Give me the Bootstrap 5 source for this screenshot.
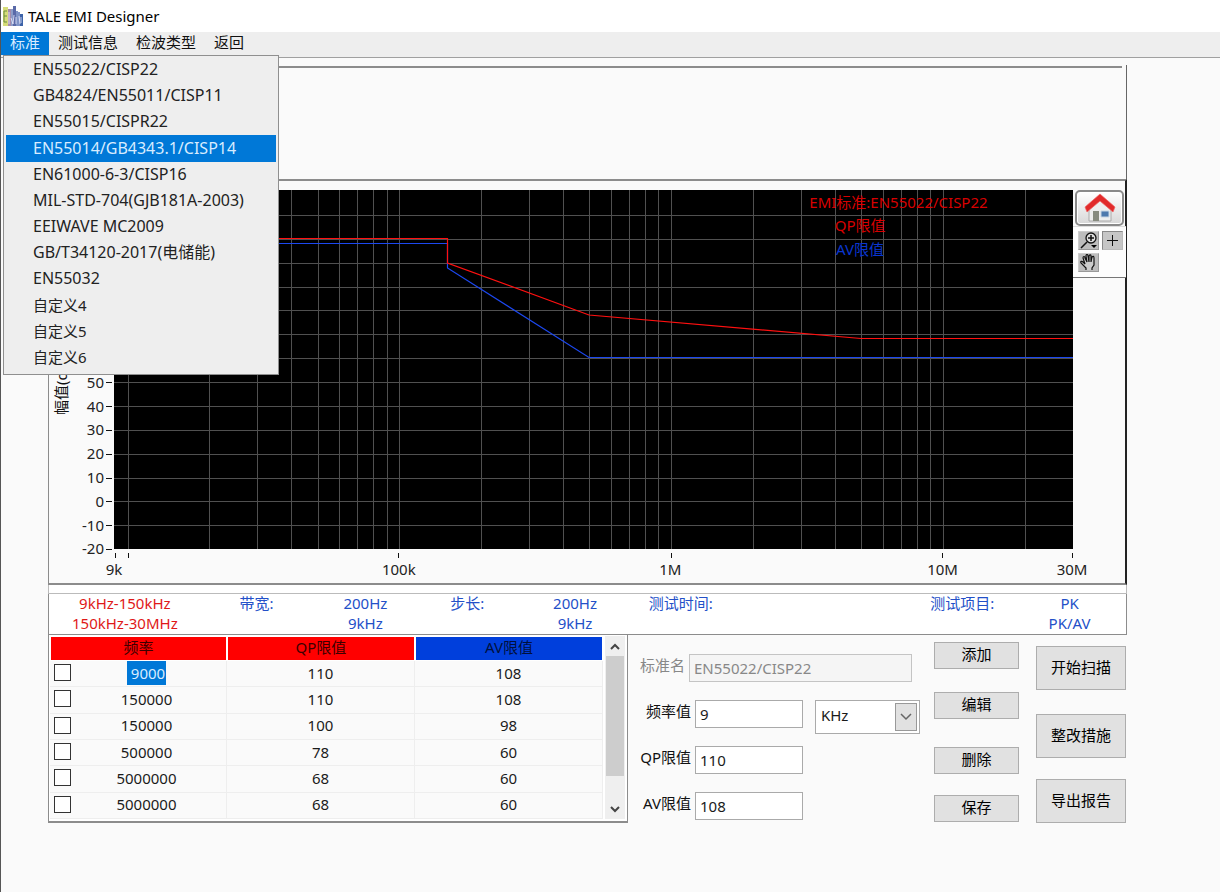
<!DOCTYPE html>
<html lang="zh-CN">
<head>
<meta charset="utf-8">
<meta name="viewport" content="width=device-width, initial-scale=1">
<title>TALE EMI Designer</title>
<link href="https://cdn.jsdelivr.net/npm/bootstrap@5.3.0/dist/css/bootstrap.min.css" rel="stylesheet">
<style>
  :root { --line: #8c8c8c; --ui-blue: #0078d7; }
  body { font: 15px/20px "Noto Sans", "Noto Sans CJK SC", sans-serif; color: #1a1a1a; background: #fafafa; }
  .app { min-height: 100vh; border-left: 1px solid #555; }
  .titlebar { height: 32px; color: #000; padding: 0 2px; gap: 4px; }
  .menubar { height: 26px; background: #eee; border-bottom: 1px solid #a0a0a0; }
  .menubar .nav-link { height: 23px; padding: 0 9px; line-height: 20px; color: #111; border-radius: 0; }
  .menubar .nav-link.active { background: var(--ui-blue); color: #d8ecff; }
  .std-menu { top: 23px; left: 2px; width: 276px; height: 320px; margin: 0; padding: 1px 2px 3px; font-size: 16px; background: #eee; border: 1px solid #8f8f8f; border-radius: 0; }
  .std-menu.show { display: grid; grid-auto-rows: 1fr; }
  .std-menu li { display: grid; }
  .std-menu .dropdown-item { display: flex; align-items: center; padding: 0 27px 2px; color: #222; line-height: 20px; }
  .std-menu .dropdown-item.active { background: var(--ui-blue); color: #d8ecff; }
  .std-menu .zh { font-size: 15px; }
  .workspace { margin: 7px 93px 0 47px; }
  .top-panel { height: 114px; border-right: 1px solid #666; padding: 1px 4px 0 0; }
  .top-panel div { border-top: 2px solid var(--line); }
  .chart-panel { display: grid; grid-template-columns: 65px minmax(0, 1fr) 52px; border: 2px solid var(--line); border-left-width: 1px; border-right-color: #222; padding-top: 9px; }
  .chart { height: 393px; overflow: visible; display: block; font-size: 15px; }
  .tools-box { background: #fdfdfd; border-top: 1px solid #ddd; border-bottom: 1px solid #777; margin-right: -1px; height: 52px; padding: 4px 0 0 5px; gap: 3px 4px; grid-template-columns: 20px 20px; align-content: start; }
  .home-btn { width: 49px; height: 36px; margin-left: 2px; border: 2px solid #8a8a8a; border-radius: 5px; background: linear-gradient(#fff, #d8d8d8); box-shadow: inset 0 0 0 1px #fff; }
  .tool-btn { width: 21px; height: 19px; background: #bdbdbd; border: 1px solid #999; border-top-color: #ccc; border-left-color: #ccc; }
  .tool-btn.pressed { background: #c6c6c6; border-color: #888 #bbb #bbb #888; }
  .strip { height: 9px; background: #fff; border: solid #bbb; border-width: 0 1px 1px; }
  .info { display: grid; grid-template-columns: 152fr 112fr 106fr 98fr 118fr 94fr 178fr 114fr 101fr; background: #fff; border: 1px solid var(--line); border-top: 0; padding-right: 6px; height: 41px; line-height: 20px; color: #2350c8; text-align: center; white-space: nowrap; }
  .info > div { margin-top: -1px; }
  .range { color: #e01818; }
  .lower { display: grid; grid-template-columns: minmax(0, 580fr) minmax(0, 306fr) minmax(0, 101fr) minmax(0, 92fr); }
  .limits { border: 1px solid var(--line); border-width: 0 1px 2px; height: 188px; padding: 1px 2px 2px 1px; background: #fff; }
  .limits table { height: 183px; table-layout: fixed; border-collapse: separate; border-spacing: 0; background: #fafafa; }
  .limits th { height: 25px; padding: 0 0 3px; line-height: 20px; font-weight: 400; color: #3c0000; background: red; border: 1px solid #fff; }
  .limits th.av { background: #003fdc; color: #00103c; }
  .limits td { padding: 0 0 2px; border: solid #eee; border-width: 0 1px 1px 0; line-height: 20px; }
  .limits .form-check-input { width: 17px; height: 17px; margin: 0 0 0 4px; border: 1px solid #333; border-radius: 0; background-color: #fff; }
  .picked { background: var(--ui-blue); color: #d8ecff; padding: 2px 1px 2px 4px; }
  .sbar { width: 20px; background: #efefef; margin-left: 2px; }
  .sbar .thumb { height: 120px; margin: 0 1px; background: #cdcdcd; }
  .sbar button { height: 20px; }
  .fields { padding: 19px 14px 0 11px; gap: 18px; }
  .fields > div { height: 28px; align-items: flex-start; }
  .fields label { flex: 0 0 52px; text-align: right; white-space: nowrap; line-height: 22px; color: #111; }
  .fields .form-control, .fields .form-select { min-width: 0; font-size: 15px; line-height: 20px; border: 1px solid #aaa; border-radius: 0; padding: 3px 4px; height: 28px; color: #1a1a1a; background-color: #fff; }
  .fields .name-label { flex-basis: 46px; color: #888; }
  .fields .form-control:disabled { background: #f5f5f5; color: #888; border-color: #c4c4c4; }
  .fields .unit { display: grid; padding-left: 12px; }
  .unit > * { grid-area: 1 / 1; }
  .fields .unit .form-select { height: 34px; padding: 0 5px 4px; background-image: none; }
  .arrow { justify-self: end; width: 22px; height: 28px; margin: 3px; background: #e1e1e1; border: 1px solid #999; pointer-events: none; }
  .btns { display: grid; align-items: start; align-content: start; }
  .edit-btns { grid-template-rows: 50px 55px 48px 27px; padding: 7px 0 0; margin-right: 16px; }
  .run-btns { grid-template-rows: 68px 65px 44px; padding: 11px 1px 0; }
  .btns .btn { font-size: 15px; line-height: 20px; height: 27px; padding: 0 0 3px; border: 1px solid #adadad; border-radius: 0; background: #e1e1e1; color: #000; }
  .run-btns .btn { height: 44px; }
</style>
</head>
<body>
<div class="app">
  <header class="titlebar bg-white d-flex align-items-center">
    <svg width="21" height="20" viewBox="0 0 21 20" aria-hidden="true">
      <path d="M0 1h5v19H0z" fill="#d6dc7a"/><path d="M5 3h3v17H5z" fill="#a58aa8"/><path d="M8 3h2v17H8z" fill="#8c9cc8"/><path d="M10 0h3v20h-3z" fill="#5a6aa8"/><path d="M13 5h2v15h-2zM15 6h2v14h-2z" fill="#7f93c6"/><path d="M17 8h3v12h-3z" fill="#3d63a8"/>
      <path d="M4 5H1v11h3M1 10h3" fill="none" stroke="#6b8e3c"/><path d="M6 6v12M8 12l2 6 1-9M13 11v7M16 10l1 8M18 11v6" fill="none" stroke="#eef" stroke-width=".8"/>
    </svg>
    <span>TALE EMI Designer</span>
  </header>

  <nav class="menubar">
    <ul class="nav flex-nowrap">
      <li class="nav-item dropdown position-relative">
        <a class="nav-link active" href="#" aria-expanded="true">标准</a>
        <ul class="dropdown-menu show std-menu">
          <li><a class="dropdown-item" href="#">EN55022/CISP22</a></li>
          <li><a class="dropdown-item" href="#">GB4824/EN55011/CISP11</a></li>
          <li><a class="dropdown-item" href="#">EN55015/CISPR22</a></li>
          <li><a class="dropdown-item active" href="#">EN55014/GB4343.1/CISP14</a></li>
          <li><a class="dropdown-item" href="#">EN61000-6-3/CISP16</a></li>
          <li><a class="dropdown-item" href="#">MIL-STD-704(GJB181A-2003)</a></li>
          <li><a class="dropdown-item" href="#">EEIWAVE MC2009</a></li>
          <li><a class="dropdown-item" href="#">GB/T34120-2017(电储能)</a></li>
          <li><a class="dropdown-item" href="#">EN55032</a></li>
          <li><a class="dropdown-item zh" href="#">自定义4</a></li>
          <li><a class="dropdown-item zh" href="#">自定义5</a></li>
          <li><a class="dropdown-item zh" href="#">自定义6</a></li>
        </ul>
      </li>
      <li class="nav-item"><a class="nav-link" href="#">测试信息</a></li>
      <li class="nav-item"><a class="nav-link" href="#">检波类型</a></li>
      <li class="nav-item"><a class="nav-link" href="#">返回</a></li>
    </ul>
  </nav>

  <main class="workspace">
    <section class="top-panel"><div></div></section>

    <section class="chart-panel">
      <span></span>
      <svg class="chart w-100" role="img" aria-label="EMI 限值曲线">
        <svg width="100%" height="359" viewBox="0 0 959 359" preserveAspectRatio="none">
          <rect width="959" height="359"/>
          <path stroke="#505050" fill="none" shape-rendering="crispEdges" vector-effect="non-scaling-stroke" d="M14 0V360M95 0V360M143 0V360M177 0V360M204 0V360M225 0V360M243 0V360M259 0V360M273 0V360M285 0V360M367 0V360M415 0V360M449 0V360M475 0V360M497 0V360M515 0V360M531 0V360M544 0V360M557 0V360M639 0V360M687 0V360M721 0V360M747 0V360M769 0V360M787 0V360M803 0V360M816 0V360M829 0V360M911 0V360M0 25H959M0 49H959M0 73H959M0 97H959M0 120H959M0 144H959M0 168H959M0 192H959M0 216H959M0 240H959M0 264H959M0 288H959M0 311H959M0 335H959"/>
          <g fill="none" stroke-width="1.200">
            <polyline stroke="#1c48f0" vector-effect="non-scaling-stroke" points="0,53.500 333.500,53.500 333.500,78 475,167.500 959,167.500"/>
            <polyline stroke="#ff1010" vector-effect="non-scaling-stroke" points="0,48.500 333.500,48.500 333.500,73 475,125 747,148.500 959,148.500"/>
          </g>
        </svg>
        <g text-anchor="middle">
          <text x="81.800%" y="18" fill="#d80000">EMI标准:EN55022/CISP22</text>
          <text x="77.800%" y="41" fill="#d80000">QP限值</text>
          <text x="77.800%" y="65" fill="#0a36d0">AV限值</text>
        </g>
        <g text-anchor="end" fill="#222">
          <text x="-10" y="198">50</text><text x="-10" y="222">40</text><text x="-10" y="245">30</text><text x="-10" y="269">20</text><text x="-10" y="293">10</text><text x="-10" y="317">0</text><text x="-10" y="341">-10</text><text x="-10" y="364">-20</text>
        </g>
        <path stroke="#111" shape-rendering="crispEdges" d="M-8 192h6M-8 216h6M-8 240h6M-8 264h6M-8 288h6M-8 311h6M-8 335h6M-8 359h6"/>
        <g stroke="#111" shape-rendering="crispEdges">
          <line x1="1" x2="1" y1="363" y2="368"/><line x1="1.5%" x2="1.5%" y1="363" y2="368"/><line x1="29.7%" x2="29.7%" y1="363" y2="368"/><line x1="58.100%" x2="58.100%" y1="363" y2="368"/><line x1="86.400%" x2="86.400%" y1="363" y2="368"/><line x1="99.900%" x2="99.900%" y1="363" y2="368"/>
        </g>
        <g text-anchor="middle" fill="#222">
          <text x="0" y="385">9k</text><text x="29.700%" y="385">100k</text><text x="58%" y="385">1M</text><text x="86.400%" y="385">10M</text><text x="99.900%" y="385">30M</text>
        </g>
        <text transform="rotate(-90)" x="-225" y="-47" fill="#111">幅值(dBuV)</text>
      </svg>
      <aside>
        <button class="home-btn d-flex align-items-center justify-content-center p-0" type="button" aria-label="主页">
          <svg width="32" height="30" viewBox="0 0 32 30">
            <path d="M5 13 16 5l11 8v15H5z" fill="#eee" stroke="#aaa"/><path d="M9 18h6v10H9z" fill="#888c80"/><path d="M17 18h8v6h-8z" fill="#4d79ad" stroke="#c8d6e4"/>
            <path d="M1 14 16 1l15 13-2 5L16 8 3 19z" fill="#e12a2a" stroke="#f06464" stroke-width=".7"/>
          </svg>
        </button>
        <div class="tools-box d-grid">
          <button class="tool-btn p-0 d-flex" type="button" aria-label="缩放"><svg width="19" height="17" viewBox="0 0 19 17"><circle cx="12" cy="6" r="5" fill="#ddd" stroke="#111" stroke-width="1.300"/><path d="M9 6h6M12 3v6M2 16l6-6" stroke="#111" stroke-width="1.500"/><path d="M12 13h6l-3 3z"/></svg></button>
          <button class="tool-btn pressed p-0 d-flex" type="button" aria-label="光标"><svg width="19" height="17" viewBox="0 0 19 17"><path d="M4 8.500h11M9.500 3v11" stroke="#111"/></svg></button>
          <button class="tool-btn p-0 d-flex" type="button" aria-label="平移"><svg width="19" height="17" viewBox="0 0 19 17"><path d="M7 16v-2L2 9c-1-2 1-2 2-1l2 2L4 4c0-2 2-2 2 0l2 4-1-6c0-2 2-2 2 0l1 6V2c1-2 2-1 2 0v6l1-5c1-1 2-1 2 1v7l-2 3v2" fill="#ccc" stroke="#111" stroke-width="1.200"/></svg></button>
        </div>
      </aside>
    </section>

    <div class="strip"></div>
    <section class="info">
      <div class="range">9kHz-150kHz<br>150kHz-30MHz</div>
      <div>带宽:</div><div>200Hz<br>9kHz</div>
      <div>步长:</div><div>200Hz<br>9kHz</div>
      <div>测试时间:</div><div></div>
      <div>测试项目:</div><div>PK<br>PK/AV</div>
    </section>

    <section class="lower">
      <div class="limits d-flex align-items-start">
        <table class="flex-grow-1 text-center">
          <colgroup><col style="width:32%"><col style="width:34%"><col style="width:34%"></colgroup>
          <thead><tr><th>频率</th><th>QP限值</th><th class="av">AV限值</th></tr></thead>
          <tbody>
            <tr><td><div class="d-flex align-items-center"><input class="form-check-input" type="checkbox" id="r1"><label class="flex-grow-1 pe-1" for="r1"><span class="picked">9000</span></label></div></td><td>110</td><td>108</td></tr>
            <tr><td><div class="d-flex align-items-center"><input class="form-check-input" type="checkbox" id="r2"><label class="flex-grow-1 pe-1" for="r2">150000</label></div></td><td>110</td><td>108</td></tr>
            <tr><td><div class="d-flex align-items-center"><input class="form-check-input" type="checkbox" id="r3"><label class="flex-grow-1 pe-1" for="r3">150000</label></div></td><td>100</td><td>98</td></tr>
            <tr><td><div class="d-flex align-items-center"><input class="form-check-input" type="checkbox" id="r4"><label class="flex-grow-1 pe-1" for="r4">500000</label></div></td><td>78</td><td>60</td></tr>
            <tr><td><div class="d-flex align-items-center"><input class="form-check-input" type="checkbox" id="r5"><label class="flex-grow-1 pe-1" for="r5">5000000</label></div></td><td>68</td><td>60</td></tr>
            <tr><td><div class="d-flex align-items-center"><input class="form-check-input" type="checkbox" id="r6"><label class="flex-grow-1 pe-1" for="r6">5000000</label></div></td><td>68</td><td>60</td></tr>
          </tbody>
        </table>
        <div class="sbar d-flex flex-column align-self-stretch">
          <button class="border-0 bg-transparent p-0 d-flex justify-content-center align-items-center" type="button" aria-label="向上滚动"><svg width="10" height="7"><path d="M1 6l4-4 4 4" fill="none" stroke="#444" stroke-width="2"/></svg></button>
          <div class="thumb"></div>
          <button class="border-0 bg-transparent p-0 d-flex justify-content-center align-items-center mt-auto" type="button" aria-label="向下滚动"><svg width="10" height="7"><path d="M1 1l4 4 4-4" fill="none" stroke="#444" stroke-width="2"/></svg></button>
        </div>
      </div>

      <form class="fields d-flex flex-column">
        <div class="d-flex"><label class="name-label me-1" for="name">标准名</label><input class="form-control flex-grow-1 w-auto me-2" id="name" value="EN55022/CISP22" disabled></div>
        <div class="row g-0">
          <div class="d-flex gap-1 col-7"><label for="freq">频率值</label><input class="form-control" id="freq" value="9"></div>
          <div class="unit col-5"><select class="form-select" id="unit" aria-label="单位"><option>KHz</option><option>MHz</option></select>
            <span class="arrow d-flex align-items-center justify-content-center"><svg width="12" height="8"><path d="M1 1l5 5 5-5" fill="none" stroke="#666" stroke-width="1.500"/></svg></span></div>
        </div>
        <div class="row g-0"><div class="d-flex gap-1 col-7"><label for="qp">QP限值</label><input class="form-control" id="qp" value="110"></div></div>
        <div class="row g-0"><div class="d-flex gap-1 col-7"><label for="av">AV限值</label><input class="form-control" id="av" value="108"></div></div>
      </form>

      <div class="btns edit-btns">
        <button class="btn" type="button">添加</button><button class="btn" type="button">编辑</button><button class="btn" type="button">删除</button><button class="btn" type="button">保存</button>
      </div>
      <div class="btns run-btns">
        <button class="btn" type="button">开始扫描</button><button class="btn" type="button">整改措施</button><button class="btn" type="button">导出报告</button>
      </div>
    </section>
  </main>
</div>
<script src="https://cdn.jsdelivr.net/npm/bootstrap@5.3.0/dist/js/bootstrap.bundle.min.js"></script>
</body>
</html>
